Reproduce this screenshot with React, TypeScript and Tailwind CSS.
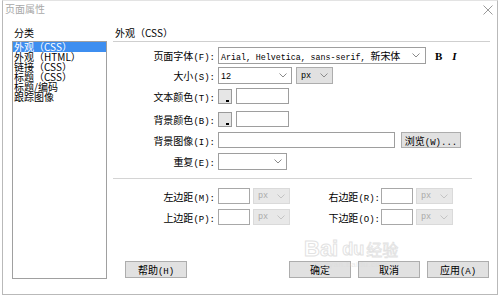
import React from "react";

function Chev({ c = "#777" }: { c?: string }) {
  return (
    <svg width="8" height="5" viewBox="0 0 8 5" className="shrink-0">
      <path d="M0.5 0.5 L4 4 L7.5 0.5" fill="none" stroke={c} strokeWidth="1" />
    </svg>
  );
}

function Lbl({ c, k, colon = true }: { c: string; k: string; colon?: boolean }) {
  return (
    <span className="whitespace-nowrap leading-[12px]">
      <span className="text-[10px]">{c}</span>
      <span className="font-['Liberation_Mono','Noto_Sans_CJK_SC',monospace] text-[9px]">({k}){colon ? ":" : ""}</span>
    </span>
  );
}

function Label({ c, k, w = "w-[102px]" }: { c: string; k: string; w?: string }) {
  return <div className={`${w} flex justify-end shrink-0`}><Lbl c={c} k={k} /></div>;
}

function Swatch() {
  return (
    <div className="relative w-[14px] h-[15px] border border-[#9a9a9a] bg-[#e6e6e6] shrink-0">
      <div className="absolute right-[2px] bottom-[1px] w-[3px] h-[2px] bg-black" />
    </div>
  );
}

function PxDisabled() {
  return (
    <div className="ml-[3px] w-[37px] h-[16px] bg-[#e8e8e8] border border-[#dadada] flex items-center justify-between pl-[4px] pr-[4px] text-[#aaa] font-['Liberation_Mono',monospace] text-[8.5px]">
      <span>px</span>
      <Chev c="#c4c4c4" />
    </div>
  );
}

function Btn({ children, w = "w-[62px]" }: { children: React.ReactNode; w?: string }) {
  return (
    <div className={`${w} h-[17px] bg-[#e1e1e1] border border-[#adadad] flex items-center justify-center shrink-0`}>
      {children}
    </div>
  );
}

export default function App() {
  const items = ["外观（CSS）", "外观（HTML）", "链接（CSS）", "标题（CSS）", "标题/编码", "跟踪图像"];
  return (
    <div className="w-[500px] h-[297px] bg-white overflow-hidden relative font-['Noto_Sans_CJK_SC',sans-serif] text-black">
      <div className="ml-[2px] w-[496px] h-[295px] border border-[#b9b9b9] border-t-[#e3e3e3] flex flex-col">
        {/* title bar */}
        <div className="h-[19px] flex items-start justify-between shrink-0">
          <div className="pl-[2px] pt-[1px] text-[10px] leading-[14px] text-[#a8a8a8]">页面属性</div>
          <svg width="10" height="10" viewBox="0 0 10 10" className="mt-[4px] mr-[4px]">
            <path d="M0.5 0.5 L9.5 9.5 M9.5 0.5 L0.5 9.5" stroke="#9a9a9a" strokeWidth="1" />
          </svg>
        </div>
        {/* content */}
        <div className="flex flex-row flex-1 pb-[15px]">
          {/* left */}
          <div className="ml-[9px] flex flex-col">
            <div className="h-[21px] pl-[2px] pt-[7px] text-[10px] leading-[12px]">分类</div>
            <div className="w-[95px] h-[238px] border border-[#a0a0a0] bg-white flex flex-col">
              {items.map((t, i) => (
                <div
                  key={t}
                  className={
                    i === 0
                      ? "h-[10px] leading-[10px] text-[10px] bg-[#3d8ef0] text-white pl-[1px] whitespace-nowrap"
                      : "h-[10px] leading-[10px] text-[10px] pl-[1px] whitespace-nowrap"
                  }
                >
                  {t}
                </div>
              ))}
            </div>
          </div>
          {/* right */}
          <div className="ml-[6px] w-[377px] flex flex-col">
            <div className="h-[22px] border-b border-[#cfcfcf] pl-[2px] pt-[7px] text-[10px] leading-[12px]">外观（CSS）</div>

            {/* font */}
            <div className="mt-[5px] h-[17px] flex items-center">
              <Label c="页面字体" k="F" />
              <div className="ml-[3px] w-[208px] h-[17px] border border-[#9e9e9e] bg-white flex items-center justify-between pl-[2px] pr-[5px]">
                <span className="whitespace-nowrap leading-[12px]">
                  <span className="font-['Liberation_Mono',monospace] text-[8.3px]">Arial, Helvetica, sans-serif, </span>
                  <span className="text-[10px]">新宋体</span>
                </span>
                <Chev c="#8a8a8a" />
              </div>
              <span className="ml-[9px] font-['Liberation_Serif',serif] font-bold text-[11px] leading-[12px]">B</span>
              <span className="ml-[10px] font-['Liberation_Serif',serif] font-bold italic text-[11px] leading-[12px]">I</span>
            </div>

            {/* size */}
            <div className="mt-[3px] h-[17px] flex items-center">
              <Label c="大小" k="S" />
              <div className="ml-[3px] w-[74px] h-[17px] border border-[#9e9e9e] bg-white flex items-center justify-between pl-[2px] pr-[4px]">
                <span className="font-['Liberation_Sans',sans-serif] text-[9px] leading-[12px]">12</span>
                <Chev c="#8a8a8a" />
              </div>
              <div className="ml-[4px] w-[37px] h-[17px] bg-[#e1e1e1] border border-[#adadad] flex items-center justify-between pl-[4px] pr-[4px]">
                <span className="font-['Liberation_Mono',monospace] text-[8.5px] leading-[12px]">px</span>
                <Chev c="#8a8a8a" />
              </div>
            </div>

            {/* text color */}
            <div className="mt-[4px] h-[16px] flex items-center">
              <Label c="文本颜色" k="T" />
              <div className="ml-[3px]"><Swatch /></div>
              <div className="ml-[4px] w-[53px] h-[16px] border border-[#9e9e9e] bg-white" />
            </div>

            {/* bg color */}
            <div className="mt-[7px] h-[16px] flex items-center">
              <Label c="背景颜色" k="B" />
              <div className="ml-[3px]"><Swatch /></div>
              <div className="ml-[4px] w-[53px] h-[16px] border border-[#9e9e9e] bg-white" />
            </div>

            {/* bg image */}
            <div className="mt-[5px] h-[16px] flex items-center">
              <Label c="背景图像" k="I" />
              <div className="ml-[3px] w-[177px] h-[16px] border border-[#9e9e9e] bg-white" />
              <div className="ml-[6px] w-[60px] h-[16px] bg-[#e1e1e1] border border-[#adadad] flex items-center justify-center">
                <span className="whitespace-nowrap leading-[12px]">
                  <span className="text-[10px]">浏览</span>
                  <span className="font-['Liberation_Mono',monospace] text-[9px]">(W)...</span>
                </span>
              </div>
            </div>

            {/* repeat */}
            <div className="mt-[5px] h-[17px] flex items-center">
              <Label c="重复" k="E" />
              <div className="ml-[3px] w-[69px] h-[17px] border border-[#9e9e9e] bg-white flex items-center justify-end pr-[4px]">
                <Chev c="#8a8a8a" />
              </div>
            </div>

            <div className="mt-[8px] w-[359px] border-t border-[#d4d4d4]" />

            {/* margins row 1 */}
            <div className="mt-[9px] h-[16px] flex items-center">
              <Label c="左边距" k="M" />
              <div className="ml-[3px] w-[32px] h-[16px] border border-[#a8a8a8] bg-white" />
              <PxDisabled />
              <Label c="右边距" k="R" w="w-[90px]" />
              <div className="ml-[1px] w-[32px] h-[16px] border border-[#a8a8a8] bg-white" />
              <PxDisabled />
            </div>

            {/* margins row 2 */}
            <div className="mt-[5px] h-[16px] flex items-center">
              <Label c="上边距" k="P" />
              <div className="ml-[3px] w-[32px] h-[16px] border border-[#a8a8a8] bg-white" />
              <PxDisabled />
              <Label c="下边距" k="O" w="w-[90px]" />
              <div className="ml-[1px] w-[32px] h-[16px] border border-[#a8a8a8] bg-white" />
              <PxDisabled />
            </div>

            {/* buttons */}
            <div className="mt-[36px] h-[17px] flex items-center">
              <div className="ml-[12px]">
                <Btn><Lbl c="帮助" k="H" colon={false} /></Btn>
              </div>
              <div className="flex-1" />
              <Btn><span className="text-[10px] leading-[12px]">确定</span></Btn>
              <div className="ml-[7px]"><Btn><span className="text-[10px] leading-[12px]">取消</span></Btn></div>
              <div className="ml-[7px] mr-[1px]"><Btn><Lbl c="应用" k="A" colon={false} /></Btn></div>
            </div>
          </div>
        </div>
      </div>

      {/* watermark */}
      <div className="absolute left-[304px] top-[238px] pointer-events-none flex flex-col items-center opacity-60">
        <div className="flex items-end leading-[22px]">
          <span className="font-['Liberation_Sans',sans-serif] font-bold text-[22px] text-white [-webkit-text-stroke:1px_#cfcfcf]">Bai</span>
          <span className="font-['Liberation_Sans',sans-serif] font-bold text-[18px] text-white [-webkit-text-stroke:1px_#cfcfcf] ml-[4px]">du</span>
          <span className="text-[16px] text-white [-webkit-text-stroke:0.8px_#cfcfcf] ml-[2px]">经验</span>
        </div>
        <div className="font-['Liberation_Sans',sans-serif] text-[8px] leading-[9px] text-[#dcdcdc] tracking-[0.5px]">jingyan.baidu.com</div>
      </div>
    </div>
  );
}
